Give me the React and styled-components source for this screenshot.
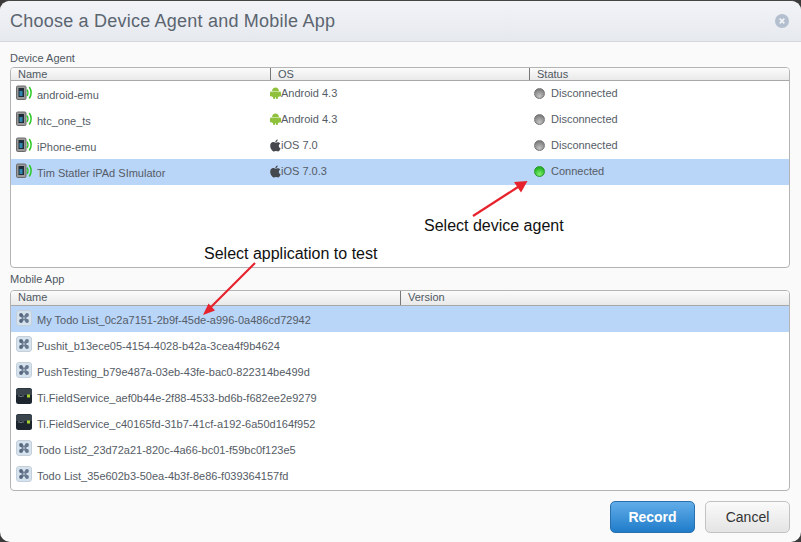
import React from "react";
import styled, { createGlobalStyle } from "styled-components";

const GlobalStyle = createGlobalStyle`
  html, body {
    margin: 0;
    padding: 0;
    background: #3a3a3a;
    font-family: "Liberation Sans", Arial, sans-serif;
  }
`;

const agents = [
  { name: "android-emu", os: "Android 4.3", kind: "android", status: "Disconnected" },
  { name: "htc_one_ts", os: "Android 4.3", kind: "android", status: "Disconnected" },
  { name: "iPhone-emu", os: "iOS 7.0", kind: "ios", status: "Disconnected" },
  { name: "Tim Statler iPAd SImulator", os: "iOS 7.0.3", kind: "ios", status: "Connected", selected: true },
];

const apps = [
  { name: "My Todo List_0c2a7151-2b9f-45de-a996-0a486cd72942", selected: true },
  { name: "Pushit_b13ece05-4154-4028-b42a-3cea4f9b4624" },
  { name: "PushTesting_b79e487a-03eb-43fe-bac0-822314be499d" },
  { name: "Ti.FieldService_aef0b44e-2f88-4533-bd6b-f682ee2e9279", dark: true },
  { name: "Ti.FieldService_c40165fd-31b7-41cf-a192-6a50d164f952", dark: true },
  { name: "Todo List2_23d72a21-820c-4a66-bc01-f59bc0f123e5" },
  { name: "Todo List_35e602b3-50ea-4b3f-8e86-f039364157fd" },
];

const DeviceIcon = () => (
  <svg width="16" height="16" viewBox="0 0 16 16">
    <rect x="0.5" y="1" width="9.5" height="13.5" rx="1.2" fill="#9a9a9a" stroke="#6b6b6b" />
    <rect x="2.5" y="3" width="5.5" height="9" fill="#1f2c38" />
    <rect x="3.5" y="6" width="3" height="5" fill="#2f86b0" />
    <path d="M11 4.5c1.2 2 1.2 4.5 0 6.500" fill="none" stroke="#2fc92a" strokeWidth="1.4" />
    <path d="M13.300 2c2.200 3.400 2.200 8 0 11.500" fill="none" stroke="#2fc92a" strokeWidth="1.500" />
  </svg>
);

const AndroidIcon = () => (
  <svg width="11" height="12" viewBox="0 0 11 12">
    <path d="M2 4.600C2 2.200 3.600.6 5.500.6S9 2.200 9 4.600z" fill="#8fc13d" />
    <rect x="2" y="5" width="7" height="5" rx="0.8" fill="#8fc13d" />
    <rect x="0" y="4.600" width="2.400" height="4.800" rx="1.200" fill="#8fc13d" />
    <rect x="8.600" y="4.600" width="2.400" height="4.800" rx="1.200" fill="#8fc13d" />
    <rect x="3" y="9" width="2.200" height="3" rx="1" fill="#8fc13d" />
    <rect x="5.800" y="9" width="2.200" height="3" rx="1" fill="#8fc13d" />
  </svg>
);

const AppleIcon = () => (
  <svg width="11" height="13" viewBox="0 0 11 12">
    <path
      d="M7.700 0c.1 1.200-.9 2.600-2.400 2.700C5.100 1.400 6.400.1 7.700 0zM5.400 3.200c.6 0 1.300-.5 2.300-.5 1 0 2 .4 2.500 1.300-2 1.200-1.700 4 .5 4.800-.5 1.400-1.700 3.200-2.800 3.200-.7 0-1.100-.4-2-.4s-1.300.4-2 .4C2.600 12 .2 9.100.2 6.200c0-2.300 1.500-3.600 3-3.600.9 0 1.600.6 2.200.6z"
      fill="#45484d"
    />
  </svg>
);

const AppIcon = ({ dark }) =>
  dark ? (
    <svg width="16" height="16" viewBox="0 0 16 16">
      <rect width="16" height="16" rx="2.500" fill="#1d262e" />
      <path d="M2 0.500h12a2 2 0 0 1 2 2V7H0V2.500a2 2 0 0 1 2-2z" fill="#3a444d" />
      <path d="M2.500 8h1M4.500 8.500h1M6.500 8h1" stroke="#c8d0d4" strokeWidth="1" />
      <rect x="11" y="6.500" width="3" height="3" fill="#a5d32c" />
    </svg>
  ) : (
    <svg width="16" height="16" viewBox="0 0 16 16">
      <rect x="0.500" y="0.500" width="15" height="15" rx="2.500" fill="#d6e2ee" stroke="#c3d0dc" />
      <path d="M5 5L11 11M11 5L5 11" stroke="#4f6078" strokeWidth="3" opacity="0.75" />
      <circle cx="5" cy="5" r="1.900" fill="#56677d" />
      <circle cx="11" cy="5" r="1.900" fill="#66788e" />
      <circle cx="5" cy="11" r="1.900" fill="#56677d" />
      <circle cx="11" cy="11" r="1.900" fill="#66788e" />
      <circle cx="8" cy="8" r="1.100" fill="#a9b8c8" />
    </svg>
  );

const CloseIcon = () => (
  <svg width="14" height="14" viewBox="0 0 14 14">
    <circle cx="7" cy="7" r="7" fill="#b3bfcf" />
    <path d="M4.700 4.700l4.600 4.600M9.300 4.700l-4.600 4.600" stroke="#f0f3f6" strokeWidth="1.800" />
  </svg>
);

const App = () => {
  return (
    <>
      <GlobalStyle />
      <Window>
        <Header>
          <Title>Choose a Device Agent and Mobile App</Title>
          <Close>
            <CloseIcon />
          </Close>
        </Header>
        <Body>
          <Section>
            <Label $height={17}>Device Agent</Label>
            <Panel>
              <HeadRow $height={13}>
                <HeadCell $width={260} $line={12}>Name</HeadCell>
                <HeadCell $width={259} $line={12}>OS</HeadCell>
                <HeadCell $line={12}>Status</HeadCell>
              </HeadRow>
              {agents.map((a) => (
                <Row key={a.name} $selected={a.selected}>
                  <NameCell $width={259}>
                    <IconSlot>
                      <DeviceIcon />
                    </IconSlot>
                    <NameText>{a.name}</NameText>
                  </NameCell>
                  <OsCell>
                    {a.kind === "android" ? <AndroidIcon /> : <AppleIcon />}
                    <span>{a.os}</span>
                  </OsCell>
                  <StatusCell>
                    <Led $on={a.status === "Connected"} />
                    <span>{a.status}</span>
                  </StatusCell>
                </Row>
              ))}
            </Panel>
          </Section>
          <Section>
            <Label $height={19}>Mobile App</Label>
            <Panel>
              <HeadRow $height={15}>
                <HeadCell $width={390} $line={13}>Name</HeadCell>
                <HeadCell $line={13}>Version</HeadCell>
              </HeadRow>
              {apps.map((a) => (
                <Row key={a.name} $selected={a.selected}>
                  <NameCell>
                    <IconSlot>
                      <AppIcon dark={a.dark} />
                    </IconSlot>
                    <NameText>{a.name}</NameText>
                  </NameCell>
                </Row>
              ))}
            </Panel>
          </Section>
          <Footer>
            <RecordButton>Record</RecordButton>
            <CancelButton>Cancel</CancelButton>
          </Footer>
        </Body>

        <Callout $left={424} $top={216}>Select device agent</Callout>
        <Callout $left={204} $top={244}>Select application to test</Callout>
        <ArrowLayer width="801" height="542" viewBox="0 0 801 542">
          <path d="M473 216L518 187" stroke="#e6222c" strokeWidth="2.200" />
          <path d="M527.500 181L521 192.500L514 182z" fill="#e6222c" />
          <path d="M255 263L211 307" stroke="#e6222c" strokeWidth="2.200" />
          <path d="M203 315L208.500 303.500L215 310.500z" fill="#e6222c" />
        </ArrowLayer>
      </Window>
    </>
  );
};

const Window = styled.div`
  position: relative;
  box-sizing: border-box;
  width: 801px;
  height: 542px;
  border-top: 1px solid #444;
  border-radius: 10px;
  background: #fafafa;
  overflow: hidden;
`;

const Header = styled.div`
  box-sizing: border-box;
  display: flex;
  align-items: center;
  justify-content: space-between;
  height: 41px;
  padding: 0 12px 0 10px;
  background: linear-gradient(#f1f3f7, #e6e9ee);
  border-bottom: 1px solid #d3d6da;
`;

const Title = styled.div`
  font-size: 18px;
  letter-spacing: 0.22px;
  color: #5b6570;
`;

const Close = styled.div`
  display: flex;
`;

const Body = styled.div`
  display: flex;
  flex-direction: column;
  padding: 8px 11px 0 10px;
`;

const Section = styled.div`
  display: flex;
  flex-direction: column;
  margin-bottom: 3px;
`;

const Label = styled.div`
  font-size: 11px;
  line-height: 16px;
  height: ${(p) => p.$height}px;
  color: #4f5862;
`;

const Panel = styled.div`
  box-sizing: border-box;
  height: 201px;
  background: #fff;
  border: 1px solid #b4b4b4;
  border-radius: 4px;
  overflow: hidden;
`;

const HeadRow = styled.div`
  box-sizing: border-box;
  display: flex;
  height: ${(p) => p.$height}px;
  background: linear-gradient(#fbfbfb, #e9e9e9);
  border-bottom: 1px solid #a8a8a8;
`;

const HeadCell = styled.div`
  box-sizing: border-box;
  flex: ${(p) => (p.$width ? `0 0 ${p.$width}px` : "1")};
  padding-left: 7px;
  font-size: 11px;
  line-height: ${(p) => p.$line}px;
  color: #4f5862;
  border-right: ${(p) => (p.$width ? "1px solid #777" : "none")};
`;

const Row = styled.div`
  display: flex;
  height: 26px;
  background: ${(p) => (p.$selected ? "#b9d5f8" : "transparent")};
  color: #555c66;
  font-size: 11px;
`;

const NameCell = styled.div`
  display: flex;
  align-items: center;
  flex: ${(p) => (p.$width ? `0 0 ${p.$width}px` : "1")};
  padding-left: 5px;
  box-sizing: border-box;
`;

const IconSlot = styled.div`
  display: flex;
  width: 21px;
  margin-top: -3px;
`;

const NameText = styled.span`
  margin-top: 2px;
`;

const OsCell = styled.div`
  display: flex;
  align-items: center;
  flex: 0 0 260px;
  margin-top: -2px;
`;

const StatusCell = styled.div`
  display: flex;
  align-items: center;
  gap: 6px;
  flex: 1;
  padding-left: 4px;
  margin-top: -2px;
`;

const Led = styled.span`
  box-sizing: border-box;
  width: 11px;
  height: 11px;
  border-radius: 50%;
  background: ${(p) =>
    p.$on
      ? "radial-gradient(circle at 50% 80%, #7ff06f, #25b325 75%)"
      : "radial-gradient(circle at 50% 80%, #c4c4c4, #7c7c7c 80%)"};
  border: 1px solid ${(p) => (p.$on ? "#2a9a2a" : "#777")};
`;

const Footer = styled.div`
  display: flex;
  justify-content: flex-end;
  gap: 10px;
  margin-top: 7px;
`;

const BaseButton = styled.button`
  width: 85px;
  height: 32px;
  padding: 0;
  border-radius: 5px;
  font-family: inherit;
`;

const RecordButton = styled(BaseButton)`
  background: linear-gradient(#62ade9, #1f7cc9);
  border: 1px solid #2a70ad;
  color: #fff;
  font-size: 14px;
  font-weight: bold;
`;

const CancelButton = styled(BaseButton)`
  background: linear-gradient(#fafafa, #e4e4e4);
  border: 1px solid #c2c2c2;
  color: #333;
  font-size: 14px;
`;

const Callout = styled.div`
  position: absolute;
  left: ${(p) => p.$left}px;
  top: ${(p) => p.$top}px;
  font-size: 16px;
  line-height: 18px;
  color: #111;
`;

const ArrowLayer = styled.svg`
  position: absolute;
  left: 0;
  top: -1px;
  pointer-events: none;
`;

export default App;
